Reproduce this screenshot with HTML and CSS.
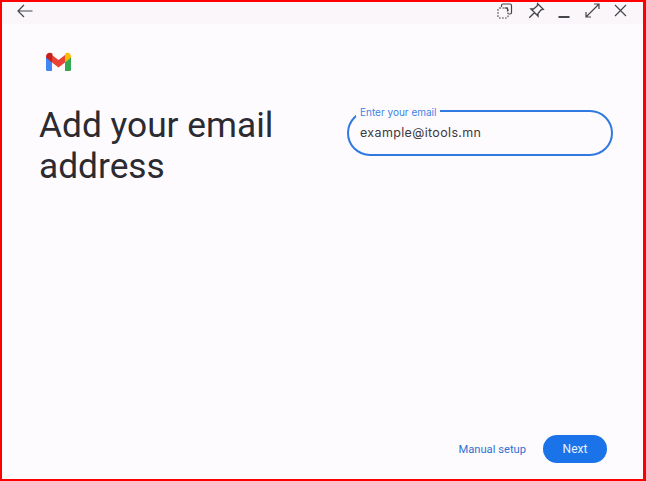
FILE: index.html
```html
<!DOCTYPE html>
<html lang="en">
<head>
<meta charset="utf-8">
<title>Add your email address</title>
<link rel="stylesheet" href="styles.css">
</head>
<body>
<div class="window">
  <header class="titlebar">
    <svg class="icon back" width="18" height="14" viewBox="0 0 18 14"><path d="M16.500 7H2M8 1 2 7l6 6"/></svg>
    <div class="controls">
      <svg class="icon" width="16" height="16" viewBox="0 0 16 16"><path d="M4.500 4V2.500A1.500 1.500 0 0 1 6 1h7a1.500 1.500 0 0 1 1.500 1.500V9.500A1.500 1.500 0 0 1 13 11h-1.500M7.500 5h3v3.500"/><path stroke-dasharray="1.700 1.300" d="M2.500 5h7A1.500 1.500 0 0 1 11 6.500v7A1.500 1.500 0 0 1 9.500 15h-7A1.500 1.500 0 0 1 1 13.500v-7A1.500 1.500 0 0 1 2.500 5z"/></svg>
      <svg class="icon pin" width="18" height="18" viewBox="0 0 16 16"><path d="M9.500 1.500 14.500 6.500 12.500 7 9.800 10.200 9.800 12.500 3.500 6.200 5.800 6.200 9 3.500zM6.500 9.500 2 14"/></svg>
      <svg class="icon min" width="12" height="16" viewBox="0 0 12 16"><path class="thick" d="M.5 14h11"/></svg>
      <svg class="icon" width="15" height="15" viewBox="0 0 15 15"><path d="M9 1h5v5M14 1 1 14M1 9v5h5"/></svg>
      <svg class="icon" width="13" height="13" viewBox="0 0 13 13"><path d="m1 1 11 11M12 1 1 12"/></svg>
    </div>
  </header>
  <main class="content">
    <svg class="logo" width="27" height="21" viewBox="0 0 27 20">
      <path fill="#4285f4" d="M1 5v13a1.500 1.500 0 0 0 1.500 1.500H7V10z"/>
      <path fill="#34a853" d="M20 10v9.500h4.500A1.500 1.500 0 0 0 26 18V5z"/>
      <path fill="#ea4335" d="M7 3.500 13.500 8.500 20 3.500V11l-6.500 5L7 11z"/>
      <path fill="#c5221f" d="M1 5c0-3.500 4-5 6.500-2.800L7 11l-6-5z"/>
      <path fill="#fbbc04" d="M20 2.200C22.500.2 26 1.500 26 5v1l-6 5z"/>
    </svg>
    <div class="columns">
      <h1 class="heading">Add your email address</h1>
      <div class="field">
        <span class="label">Enter your email</span>
        <span class="value">example@itools.mn</span>
      </div>
    </div>
    <footer class="actions">
      <a class="link">Manual setup</a>
      <button class="next">Next</button>
    </footer>
  </main>
</div>
</body>
</html>
```
FILE: styles.css
```css
* { box-sizing: border-box; }
html, body { margin: 0; height: 100%; }
body { overflow: hidden; font-family: Roboto, "Liberation Sans", sans-serif; }
.window {
  width: 646px;
  height: 481px;
  display: flex;
  flex-direction: column;
  border: solid #f00;
  border-width: 2px 3px 2px 2px;
  background: #fefbff;
}
.titlebar {
  height: 22px;
  flex: none;
  display: flex;
  align-items: center;
  justify-content: space-between;
  padding: 0 16px 5px 14px;
  background: #fbf6fa;
}
.icon { fill: none; stroke: #45464c; stroke-width: 1.200; flex: none; }
.thick { stroke-width: 2; }
.controls { display: flex; align-items: center; gap: 14px; }
.pin { margin-right: -1px; }
.min { margin-right: 1px; }
.content {
  flex: 1;
  display: flex;
  flex-direction: column;
  padding: 27px 36px 16px 37px;
}
.logo { display: block; margin-left: 6px; flex: none; }
.columns {
  display: flex;
  justify-content: space-between;
  align-items: flex-start;
  margin-top: 33px;
  flex: 1;
}
.heading {
  margin: 0;
  width: 270px;
  font-size: 35.300px;
  line-height: 41px;
  font-weight: 400;
  color: #2b2b31;
}
.field {
  position: relative;
  width: 266px;
  height: 46px;
  margin-top: 5px;
  margin-right: -6px;
  padding: 13px 11px 0;
  border: 2px solid #2f79e0;
  border-radius: 23px;
}
.label {
  position: absolute;
  top: -5px;
  left: 7px;
  padding: 0 4px;
  background: #fefbff;
  font-family: Inter, sans-serif;
  font-size: 10px;
  line-height: 10px;
  color: #3f82e3;
}
.value {
  display: block;
  font-family: Inter, sans-serif;
  font-size: 12.500px;
  letter-spacing: .35px;
  line-height: 16px;
  color: #3a3a40;
}
.actions {
  display: flex;
  justify-content: flex-end;
  align-items: center;
  gap: 17px;
}
.link { font-size: 11.200px; color: #2e72d2; }
.next {
  width: 64px;
  height: 28px;
  border: 0;
  border-radius: 14px;
  padding: 0;
  background: #1a73e8;
  color: #eaf1fd;
  font: 400 12px Roboto, sans-serif;
}
```
